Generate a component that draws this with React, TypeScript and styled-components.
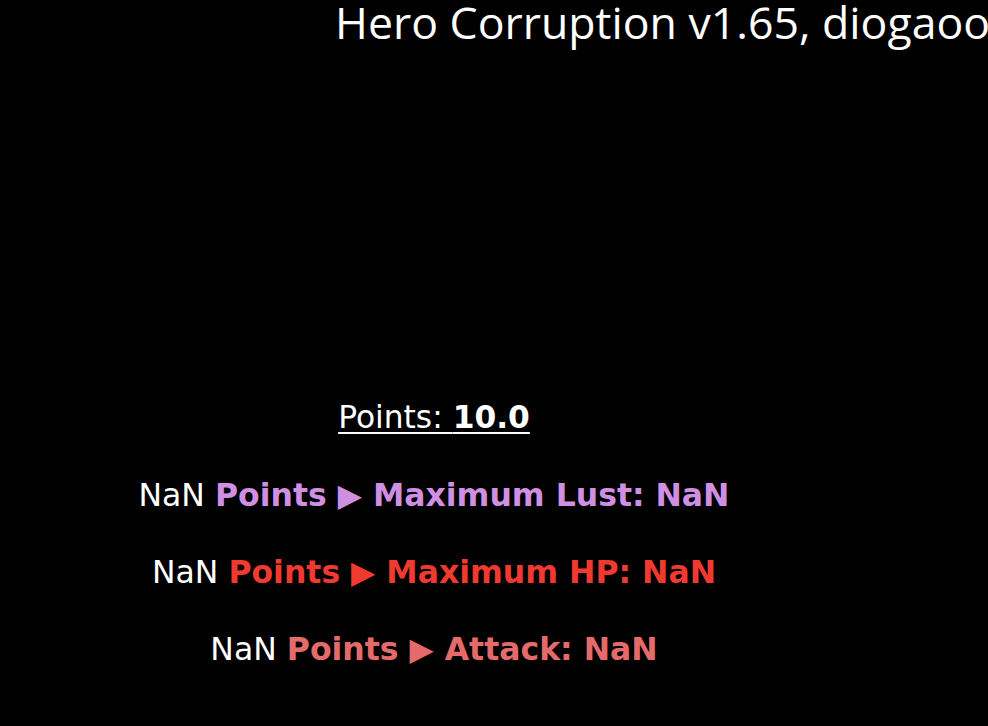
import React from "react";
import styled, { createGlobalStyle } from "styled-components";

const Global = createGlobalStyle`
  html, body { margin: 0; padding: 0; background: #000; }
  body { overflow: hidden; width: 988px; height: 726px; }
`;

const Page = styled.div`
  width: 988px;
  height: 726px;
  background: #000;
  color: #fff;
  overflow: hidden;
  display: flex;
  flex-direction: column;
`;

const Title = styled.h1`
  margin: 0;
  padding-left: 335px;
  white-space: nowrap;
  font-family: "Open Sans", "Noto Sans", sans-serif;
  font-weight: 400;
  font-size: 44.6px;
  line-height: 44px;
  color: #fff;
`;

const Column = styled.div`
  width: 868px;
  margin-top: 354px;
  display: flex;
  flex-direction: column;
  align-items: center;
  font-family: "DejaVu Sans", Verdana, sans-serif;
`;

const PointsLine = styled.div`
  font-size: 31.3px;
  line-height: 38px;
  text-decoration: underline;
  text-decoration-thickness: 2px;
  text-underline-offset: 4px;
  margin-bottom: 40px;
  white-space: nowrap;
`;

const Row = styled.div`
  font-size: 31.5px;
  line-height: 38px;
  margin-bottom: 39px;
  white-space: nowrap;
`;

const Label = styled.b<{ $color: string }>`
  color: ${(p) => p.$color};
`;

const rows = [
  { color: "#cf8fe3", label: "Maximum Lust" },
  { color: "#f03a30", label: "Maximum HP" },
  { color: "#e56b6b", label: "Attack" },
];

export default function App() {
  return (
    <Page>
      <Global />
      <Title>Hero Corruption v1.65, diogaoo</Title>
      <Column>
        <PointsLine>
          Points: <b>10.0</b>
        </PointsLine>
        {rows.map((r) => (
          <Row key={r.label}>
            NaN <Label $color={r.color}>Points ▶ {r.label}: NaN</Label>
          </Row>
        ))}
      </Column>
    </Page>
  );
}
